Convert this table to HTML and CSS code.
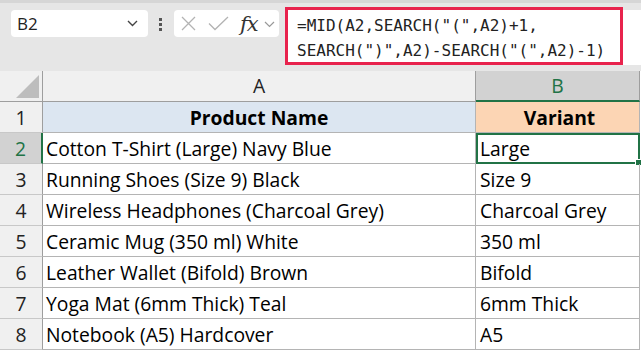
FILE: index.html
```html
<!DOCTYPE html>
<html>
<head>
<meta charset="utf-8">
<link rel="stylesheet" href="styles.css">
</head>
<body>
<div class="app">
  <div class="toolbar">
    <div class="namebox">
      <span class="name">B2</span>
      <svg class="chev" width="11" height="7" viewBox="0 0 11 7"><path d="M1 1 L5.5 5.5 L10 1" fill="none" stroke="#444" stroke-width="1.4"/></svg>
    </div>
    <div class="dots"><i></i><i></i><i></i></div>
    <div class="fnbox">
      <svg class="ic" width="15" height="15" viewBox="0 0 15 15"><path d="M1 1 L14 14 M14 1 L1 14" stroke="#b3b3b3" stroke-width="1.3" fill="none"/></svg>
      <svg class="ic check" width="21" height="15" viewBox="0 0 21 15"><path d="M1 7.5 L7 13.5 L20 1" stroke="#b3b3b3" stroke-width="1.3" fill="none"/></svg>
      <span class="fx">fx</span>
      <svg class="chev2" width="11" height="7" viewBox="0 0 11 7"><path d="M1 1 L5.5 5.5 L10 1" fill="none" stroke="#999" stroke-width="1.2"/></svg>
    </div>
    <div class="formula">
      <div class="ftext">=MID(A2,SEARCH("(",A2)+1,<br>SEARCH(")",A2)-SEARCH("(",A2)-1)</div>
    </div>
    <div class="formula-rest"></div>
  </div>
  <div class="grid">
    <div class="corner"><span class="tri"></span></div>
    <div class="colhead">A</div>
    <div class="colhead sel">B</div>
    <div class="edge"></div>

    <div class="rowhead">1</div>
    <div class="cell hdr hdr-a">Product Name</div>
    <div class="cell hdr hdr-b">Variant</div>
    <div class="edge"></div>

    <div class="rowhead sel">2</div>
    <div class="cell">Cotton T-Shirt (Large) Navy Blue</div>
    <div class="cell active">Large<span class="handle"></span></div>
    <div class="edge"></div>

    <div class="rowhead">3</div>
    <div class="cell">Running Shoes (Size 9) Black</div>
    <div class="cell">Size 9</div>
    <div class="edge"></div>

    <div class="rowhead">4</div>
    <div class="cell">Wireless Headphones (Charcoal Grey)</div>
    <div class="cell">Charcoal Grey</div>
    <div class="edge"></div>

    <div class="rowhead">5</div>
    <div class="cell">Ceramic Mug (350 ml) White</div>
    <div class="cell">350 ml</div>
    <div class="edge"></div>

    <div class="rowhead">6</div>
    <div class="cell">Leather Wallet (Bifold) Brown</div>
    <div class="cell">Bifold</div>
    <div class="edge"></div>

    <div class="rowhead">7</div>
    <div class="cell">Yoga Mat (6mm Thick) Teal</div>
    <div class="cell">6mm Thick</div>
    <div class="edge"></div>

    <div class="rowhead">8</div>
    <div class="cell">Notebook (A5) Hardcover</div>
    <div class="cell">A5</div>
    <div class="edge"></div>
  </div>
</div>
</body>
</html>
```
FILE: styles.css
```css
html, body { margin: 0; padding: 0; }
body { width: 641px; height: 352px; overflow: hidden; background: #fff; }
.app { width: 641px; height: 352px; }

.toolbar {
  height: 71px;
  box-sizing: border-box;
  background: #e6e6e6;
  border-top: 3px solid #d6d6d6;
  display: flex;
  align-items: flex-start;
  padding-left: 11px;
}
.namebox {
  margin-top: 7px;
  width: 137px; height: 27px;
  box-sizing: border-box;
  background: #fff;
  border-radius: 4px;
  display: flex; align-items: center; justify-content: space-between;
  padding: 0 10px 0 6px;
  font-family: "Open Sans", sans-serif; font-size: 17px; color: #222;
}
.dots {
  margin: 15px 0 0 11px;
  width: 4px; display: flex; flex-direction: column; gap: 2px;
}
.dots i { display: block; width: 3px; height: 3px; background: #555; }
.fnbox {
  margin: 7px 0 0 11px;
  width: 105px; height: 27px; box-sizing: border-box;
  background: #fff; border-radius: 4px;
  display: flex; align-items: center; padding-left: 7px;
}
.check { margin-left: 12px; }
.fx {
  font-family: "DejaVu Serif", serif; font-style: italic; font-size: 21px;
  color: #333; margin-left: 11px; letter-spacing: -1px; line-height: 22px;
}
.chev2 { margin-left: 6px; margin-top: 2px; }
.formula {
  margin: 4px 0 0 6px;
  width: 338px; height: 58px; box-sizing: border-box;
  border: 3px solid #e8234d;
  background: #fff;
  padding: 3px 0 0 9px;
}
.ftext {
  font-family: "DejaVu Sans Mono", monospace; font-size: 16px;
  line-height: 25px; color: #222; white-space: nowrap;
}
.formula-rest {
  margin-top: 7px;
  flex: 1; height: 55px; background: #fff;
}

.grid {
  display: grid;
  grid-template-columns: 43px 433px 164px 1px;
  grid-template-rows: 31px repeat(8, 31px);
  font-family: "Open Sans", sans-serif;
  font-size: 19.3px;
  color: #000;
}
.grid > div { box-sizing: border-box; }
.corner {
  background: #f0f0f0;
  border-right: 1px solid #9e9e9e; border-bottom: 1px solid #9e9e9e;
  position: relative;
}
.tri {
  position: absolute; left: 16px; top: 4px;
  width: 0; height: 0;
  border-left: 23px solid transparent;
  border-bottom: 23px solid #bdbdbd;
}
.colhead {
  background: #f0f0f0;
  border-right: 1px solid #9e9e9e; border-bottom: 1px solid #9e9e9e;
  text-align: center; line-height: 30px; color: #222;
}
.colhead.sel {
  background: #d2d2d2; color: #217346;
  border-bottom: 2px solid #217346;
  line-height: 29px;
}
.edge { background: #fff; }
.rowhead {
  background: #f0f0f0;
  border-right: 1px solid #9e9e9e; border-bottom: 1px solid #c8c8c8;
  text-align: center; line-height: 31px; color: #222;
}
.rowhead.sel {
  background: #d2d2d2; color: #217346;
  border-right: 2px solid #217346;
}
.cell {
  border-right: 1px solid #b4b4b4; border-bottom: 1px solid #b4b4b4;
  padding-left: 3px; line-height: 31px; white-space: nowrap;
  position: relative;
}
.grid > .cell:nth-child(4n+3) { padding-left: 4px; }
.hdr { font-weight: bold; text-align: center; padding-left: 0; }
.grid > .hdr-b { padding-left: 0; }
.hdr-a { background: #dce6f1; }
.hdr-b { background: #fcd5b4; }
.active {
  outline: 2px solid #217346; outline-offset: -2px;
}
.handle {
  position: absolute; right: -3px; bottom: -3px;
  width: 5px; height: 5px; background: #217346; border: 1px solid #fff;
}
```
